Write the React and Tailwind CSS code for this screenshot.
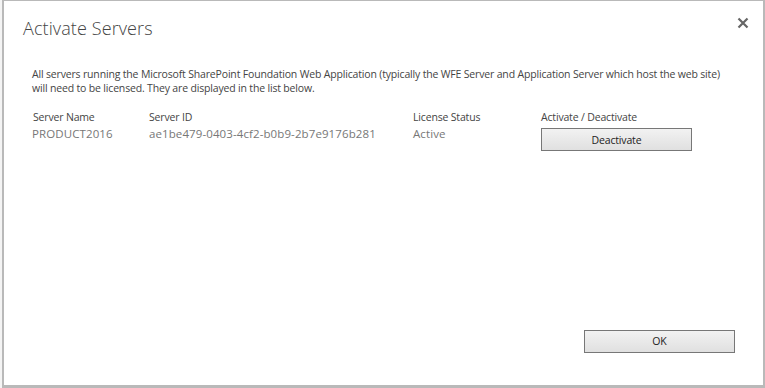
import React from 'react';

const rows = [
  { name: 'PRODUCT2016', id: 'ae1be479-0403-4cf2-b0b9-2b7e9176b281', status: 'Active' },
];

const App = () => {
  return (
    <div className="w-[765px] h-[388px] flex bg-white overflow-hidden" style={{ fontFamily: '"Open Sans", "Liberation Sans", sans-serif' }}>
      {/* strip of the page behind the dialog */}
      <div className="w-[2px] bg-[#f4f4f4]" />

      {/* DIALOG */}
      <div className="flex-1 flex flex-col border-x-2 border-t border-b-[3px] border-[#b9b9b9] bg-white">
        <header className="flex justify-between items-start h-[65px]">
          <h1 className="pl-[19px] pt-[14px] text-[18px] font-light text-[#444] tracking-[0.1px]">Activate Servers</h1>
          <button className="mt-[15px] mr-[13px] w-[14px] h-[14px] flex items-center justify-center">
            <svg width="12" height="12" viewBox="0 0 12 12">
              <path d="M1.5 1.5 L10.5 10.5 M10.5 1.5 L1.5 10.5" stroke="#666" strokeWidth="2.2" />
            </svg>
          </button>
        </header>

        <div className="pl-[28px] pr-[10px] text-[10.5px] leading-[14px] text-[#444] tracking-[-0.17px]">
          <p className="whitespace-nowrap pt-[1px]">
            All servers running the Microsoft SharePoint Foundation Web Application (typically the WFE Server and Application Server which host the web site)
            <br />
            will need to be licensed. They are displayed in the list below.
          </p>

          <div className="mt-[13px]">
            <div className="flex h-[18px] items-center text-[#444]">
              <span className="w-[117px] pl-[1px]">Server Name</span>
              <span className="w-[264px]">Server ID</span>
              <span className="w-[128px]">License Status</span>
              <span>Activate / Deactivate</span>
            </div>
            {rows.map(r => (
              <div key={r.id} className="flex items-start text-[11.5px] text-[#777] tracking-[0.1px]">
                <span className="w-[117px] pt-[1px]">{r.name}</span>
                <span className="w-[264px] pt-[1px]">{r.id}</span>
                <span className="w-[128px] pt-[1px]">{r.status}</span>
                <button className="mt-[2px] w-[151px] h-[23px] border border-[#777] bg-gradient-to-b from-[#f2f2f2] to-[#e0e0e0] text-[10.5px] text-[#222] tracking-[-0.17px]">
                  Deactivate
                </button>
              </div>
            ))}
          </div>
        </div>

        <div className="flex-1" />

        <footer className="flex justify-end pr-[28px] pb-[32px]">
          <button className="w-[151px] h-[23px] border border-[#777] bg-gradient-to-b from-[#f2f2f2] to-[#e0e0e0] text-[10.5px] text-[#222]">
            OK
          </button>
        </footer>
      </div>
    </div>
  );
};

export default App;
